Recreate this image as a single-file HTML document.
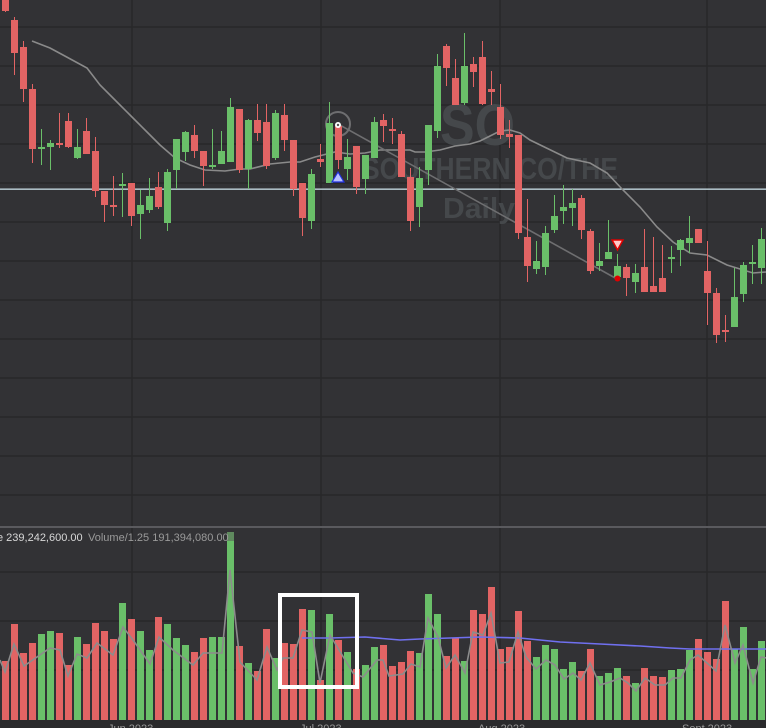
<!DOCTYPE html>
<html><head><meta charset="utf-8"><style>
html,body{margin:0;padding:0;background:#323235;}
svg{display:block;font-family:"Liberation Sans",sans-serif;}
.r{fill:#e26464}.g{fill:#6abf69}
</style></head><body>
<svg width="766" height="728" viewBox="0 0 766 728" xmlns="http://www.w3.org/2000/svg">
<rect width="766" height="728" fill="#323235"/>
<g stroke="#28282a" stroke-width="1.5">
<path d="M0 27H766M0 66H766M0 105H766M0 144H766M0 183H766M0 222H766M0 261H766M0 300H766M0 339H766M0 378H766M0 417H766M0 456H766M0 495H766"/>
<path d="M0 572H766M0 621H766M0 670H766"/>
<path d="M132 0V720M321 0V720M500 0V720M707 0V720"/>
</g>
<rect x="0" y="526" width="766" height="2" fill="#5a5a5e"/>
<rect x="0" y="720" width="766" height="8" fill="#2a2a2c"/>
<g fill="#999" font-size="11"><text x="108" y="732">Jun 2023</text><text x="300" y="732">Jul 2023</text><text x="478" y="732">Aug 2023</text><text x="682" y="732">Sept 2023</text></g>
<!-- watermark -->
<g fill="#45484b" font-weight="bold">
<text x="440" y="145" font-size="58" textLength="75" lengthAdjust="spacingAndGlyphs">SO</text>
<text x="362" y="179" font-size="31" textLength="256" lengthAdjust="spacingAndGlyphs">SOUTHERN CO/THE</text>
<text x="443" y="218" font-size="29" textLength="72" lengthAdjust="spacingAndGlyphs">Daily</text>
</g>
<!-- horizontal line -->
<rect x="0" y="188.5" width="766" height="1.3" fill="#c9dfe6"/>
<!-- price MA -->
<polyline fill="none" stroke="#8a8a8a" stroke-width="1.6" points="32,41 50,48 63,55 87,68 100,85 115,100 130,115 145,130 160,145 175,158 190,165 205,170 225,171 240,169 250,169 270,164 290,162 300,162 315,157 335,152 350,154 365,153 380,150 395,150 410,150 415,152 425,152 440,150 455,146 470,144 480,141 490,136 500,131 510,130 520,133 530,140 567,158 590,163 607,173 623,190 640,207 657,227 673,242 690,253 707,255 727,265 753,273 766,272"/>
<line x1="338" y1="124" x2="617" y2="279" stroke="#6e6e70" stroke-width="1.6"/>
<circle cx="338" cy="124" r="12" fill="none" stroke="#6e6e70" stroke-width="2"/>
<!-- wicks -->
<path stroke="#e26464" stroke-width="1" fill="none" d="M5.5 0V12M14.5 17V75M23.5 41V102M32.5 84V163M59.5 113V148M68.5 113V148M86.5 118V154M95.5 137V197M104.5 191V222M113.5 176V216M131.5 183V226M158.5 172V209M194.5 125V158M203.5 151V186M239.5 109V173M257.5 104V141M266.5 104V169M284.5 104V151M293.5 140V196M302.5 183V236M320.5 144V167M338.5 126V169M356.5 146V194M383.5 114V142M392.5 118V144M401.5 131V177M410.5 168V231M446.5 44V86M455.5 59V105M473.5 57V87M482.5 41V105M491.5 71V105M500.5 84V139M509.5 120V148M518.5 135V239M527.5 199V282M581.5 195V239M590.5 229V274M626.5 264V296M644.5 229V292M653.5 237V292M662.5 245V292M698.5 229V243M707.5 241V325M716.5 288V343M725.5 315V342"/>
<path stroke="#6abf69" stroke-width="1" fill="none" d="M41.5 129V165M50.5 140V170M77.5 129V159M122.5 173V217M140.5 190V239M149.5 178V213M167.5 169V231M176.5 139V189M185.5 131V161M212.5 129V169M221.5 131V164M230.5 98V162M248.5 119V189M275.5 110V160M311.5 169V229M329.5 102V183M347.5 139V180M365.5 155V194M374.5 117V158M419.5 167V227M428.5 125V185M437.5 54V138M464.5 33V105M536.5 241V274M545.5 226V275M554.5 195V233M563.5 185V224M572.5 189V226M599.5 243V271M608.5 220V259M617.5 254V277M635.5 264V293M671.5 246V273M680.5 239V266M689.5 216V253M734.5 268V327M743.5 262V302M752.5 245V284M761.5 228V284"/>
<!-- bodies -->
<g class="r">
<rect x="2" y="0" width="7" height="11"/><rect x="11" y="20" width="7" height="33"/><rect x="20" y="47" width="7" height="42"/><rect x="29" y="89" width="7" height="60"/><rect x="56" y="143" width="7" height="2"/><rect x="65" y="121" width="7" height="26"/><rect x="83" y="131" width="7" height="23"/><rect x="92" y="151" width="7" height="40"/><rect x="101" y="191" width="7" height="14"/><rect x="110" y="205" width="7" height="2"/><rect x="128" y="183" width="7" height="33"/><rect x="155" y="187" width="7" height="20"/><rect x="191" y="135" width="7" height="16"/><rect x="200" y="151" width="7" height="15"/><rect x="236" y="109" width="7" height="61"/><rect x="254" y="120" width="7" height="13"/><rect x="263" y="122" width="7" height="44"/><rect x="281" y="115" width="7" height="25"/><rect x="290" y="140" width="7" height="49"/><rect x="299" y="183" width="7" height="35"/><rect x="317" y="159" width="7" height="3"/><rect x="335" y="126" width="7" height="34"/><rect x="353" y="146" width="7" height="41"/><rect x="380" y="120" width="7" height="6"/><rect x="389" y="129" width="7" height="2"/><rect x="398" y="134" width="7" height="43"/><rect x="407" y="177" width="7" height="44"/><rect x="443" y="46" width="7" height="22"/><rect x="452" y="78" width="7" height="27"/><rect x="470" y="64" width="7" height="8"/><rect x="479" y="57" width="7" height="47"/><rect x="488" y="89" width="7" height="3"/><rect x="497" y="107" width="7" height="28"/><rect x="506" y="134" width="7" height="3"/><rect x="515" y="135" width="7" height="98"/><rect x="524" y="237" width="7" height="29"/><rect x="578" y="198" width="7" height="32"/><rect x="587" y="231" width="7" height="40"/><rect x="623" y="267" width="7" height="11"/><rect x="641" y="267" width="7" height="25"/><rect x="650" y="286" width="7" height="6"/><rect x="659" y="278" width="7" height="14"/><rect x="695" y="229" width="7" height="14"/><rect x="704" y="271" width="7" height="22"/><rect x="713" y="293" width="7" height="42"/><rect x="722" y="330" width="7" height="2"/>
</g>
<g class="g">
<rect x="38" y="147" width="7" height="2"/><rect x="47" y="143" width="7" height="4"/><rect x="74" y="147" width="7" height="11"/><rect x="119" y="184" width="7" height="2"/><rect x="137" y="205" width="7" height="9"/><rect x="146" y="196" width="7" height="14"/><rect x="164" y="172" width="7" height="51"/><rect x="173" y="139" width="7" height="31"/><rect x="182" y="132" width="7" height="20"/><rect x="209" y="165" width="7" height="2"/><rect x="218" y="151" width="7" height="13"/><rect x="227" y="107" width="7" height="55"/><rect x="245" y="120" width="7" height="49"/><rect x="272" y="113" width="7" height="45"/><rect x="308" y="174" width="7" height="47"/><rect x="326" y="123" width="7" height="60"/><rect x="344" y="157" width="7" height="12"/><rect x="362" y="155" width="7" height="24"/><rect x="371" y="122" width="7" height="36"/><rect x="416" y="178" width="7" height="29"/><rect x="425" y="125" width="7" height="45"/><rect x="434" y="66" width="7" height="65"/><rect x="461" y="66" width="7" height="37"/><rect x="533" y="261" width="7" height="8"/><rect x="542" y="233" width="7" height="34"/><rect x="551" y="216" width="7" height="14"/><rect x="560" y="207" width="7" height="4"/><rect x="569" y="203" width="7" height="5"/><rect x="596" y="261" width="7" height="5"/><rect x="605" y="252" width="7" height="7"/><rect x="614" y="266" width="7" height="11"/><rect x="632" y="273" width="7" height="9"/><rect x="668" y="257" width="7" height="2"/><rect x="677" y="240" width="7" height="10"/><rect x="686" y="238" width="7" height="5"/><rect x="731" y="297" width="7" height="30"/><rect x="740" y="265" width="7" height="29"/><rect x="749" y="262" width="7" height="2"/><rect x="758" y="239" width="7" height="29"/>
</g>
<!-- markers -->
<circle cx="338" cy="125" r="3" fill="#fff"/><circle cx="338" cy="125" r="1.2" fill="#555"/>
<polygon points="338,172 332,182 344,182" fill="#b8c0ff" stroke="#2030e0" stroke-width="1.2"/>
<polygon points="612,240 623,240 617.5,250" fill="#ffc8c8" stroke="#e00000" stroke-width="1.5"/>
<circle cx="617.5" cy="278.5" r="3" fill="#e00000"/>
<!-- volume bars -->
<g class="r">
<rect x="2" y="661" width="7" height="59"/><rect x="11" y="624" width="7" height="96"/><rect x="20" y="653" width="7" height="67"/><rect x="29" y="643" width="7" height="77"/><rect x="56" y="633" width="7" height="87"/><rect x="65" y="665" width="7" height="55"/><rect x="83" y="644" width="7" height="76"/><rect x="92" y="623" width="7" height="97"/><rect x="101" y="631" width="7" height="89"/><rect x="110" y="639" width="7" height="81"/><rect x="128" y="619" width="7" height="101"/><rect x="155" y="617" width="7" height="103"/><rect x="191" y="652" width="7" height="68"/><rect x="200" y="638" width="7" height="82"/><rect x="236" y="646" width="7" height="74"/><rect x="254" y="671" width="7" height="49"/><rect x="263" y="629" width="7" height="91"/><rect x="281" y="643" width="7" height="77"/><rect x="290" y="644" width="7" height="76"/><rect x="299" y="609" width="7" height="111"/><rect x="317" y="680" width="7" height="40"/><rect x="335" y="640" width="7" height="80"/><rect x="353" y="669" width="7" height="51"/><rect x="380" y="645" width="7" height="75"/><rect x="389" y="666" width="7" height="54"/><rect x="398" y="662" width="7" height="58"/><rect x="407" y="651" width="7" height="69"/><rect x="443" y="656" width="7" height="64"/><rect x="452" y="638" width="7" height="82"/><rect x="470" y="610" width="7" height="110"/><rect x="479" y="614" width="7" height="106"/><rect x="488" y="587" width="7" height="133"/><rect x="497" y="649" width="7" height="71"/><rect x="506" y="647" width="7" height="73"/><rect x="515" y="611" width="7" height="109"/><rect x="524" y="641" width="7" height="79"/><rect x="578" y="671" width="7" height="49"/><rect x="587" y="649" width="7" height="71"/><rect x="623" y="676" width="7" height="44"/><rect x="641" y="668" width="7" height="52"/><rect x="650" y="676" width="7" height="44"/><rect x="659" y="677" width="7" height="43"/><rect x="695" y="639" width="7" height="81"/><rect x="704" y="652" width="7" height="68"/><rect x="713" y="659" width="7" height="61"/><rect x="722" y="601" width="7" height="119"/>
</g>
<g class="g">
<rect x="38" y="634" width="7" height="86"/><rect x="47" y="631" width="7" height="89"/><rect x="74" y="637" width="7" height="83"/><rect x="119" y="603" width="7" height="117"/><rect x="137" y="631" width="7" height="89"/><rect x="146" y="650" width="7" height="70"/><rect x="164" y="624" width="7" height="96"/><rect x="173" y="638" width="7" height="82"/><rect x="182" y="645" width="7" height="75"/><rect x="209" y="637" width="7" height="83"/><rect x="218" y="637" width="7" height="83"/><rect x="227" y="541" width="7" height="179"/><rect x="245" y="663" width="7" height="57"/><rect x="272" y="658" width="7" height="62"/><rect x="308" y="610" width="7" height="110"/><rect x="326" y="614" width="7" height="106"/><rect x="344" y="652" width="7" height="68"/><rect x="362" y="665" width="7" height="55"/><rect x="371" y="647" width="7" height="73"/><rect x="416" y="653" width="7" height="67"/><rect x="425" y="594" width="7" height="126"/><rect x="434" y="614" width="7" height="106"/><rect x="461" y="661" width="7" height="59"/><rect x="533" y="657" width="7" height="63"/><rect x="542" y="645" width="7" height="75"/><rect x="551" y="649" width="7" height="71"/><rect x="560" y="669" width="7" height="51"/><rect x="569" y="662" width="7" height="58"/><rect x="596" y="676" width="7" height="44"/><rect x="605" y="673" width="7" height="47"/><rect x="614" y="668" width="7" height="52"/><rect x="632" y="683" width="7" height="37"/><rect x="668" y="670" width="7" height="50"/><rect x="677" y="669" width="7" height="51"/><rect x="686" y="650" width="7" height="70"/><rect x="731" y="649" width="7" height="71"/><rect x="740" y="627" width="7" height="93"/><rect x="749" y="669" width="7" height="51"/><rect x="758" y="641" width="7" height="79"/>
</g>
<rect x="227" y="532" width="7" height="9" fill="#5f8a5e"/>
<!-- volume MA lines -->
<polyline fill="none" stroke="#7070f0" stroke-width="1.6" points="302,638 330,638 365,637 400,640 420,639 480,637 520,638 560,642 600,644 640,646 670,648 690,649 766,649"/>
<polyline fill="none" stroke="#8c8c8c" stroke-width="1.6" points="0,660 5,672 14,644 24,666 50,648 60,650 68,676 77,654 87,658 97,643 113,655 123,627 133,640 150,664 159,637 173,650 193,665 203,653 222,653 230,570 240,662 257,680 267,647 277,670 283,658 293,658 302,630 312,632 320,683 330,635 353,673 363,677 377,660 383,660 389,676 403,674 411,664 420,667 428,618 438,637 446,668 455,655 465,673 473,632 483,635 491,613 500,663 509,662 518,632 526,657 536,669 546,660 555,665 564,679 573,673 581,680 590,663 600,685 610,682 620,678 628,683 636,691 645,678 655,685 665,685 673,678 681,678 690,660 698,655 716,671 725,625 735,663 743,645 753,683 761,657 766,658"/>
<rect x="280" y="595" width="77" height="92" fill="none" stroke="#ffffff" stroke-width="4"/>
<text x="-3" y="541" font-size="11" fill="#d8d8d8">e 239,242,600.00</text>
<text x="88" y="541" font-size="11" fill="#9a9a9a">Volume/1.25 191,394,080.00</text>
</svg>
</body></html>
